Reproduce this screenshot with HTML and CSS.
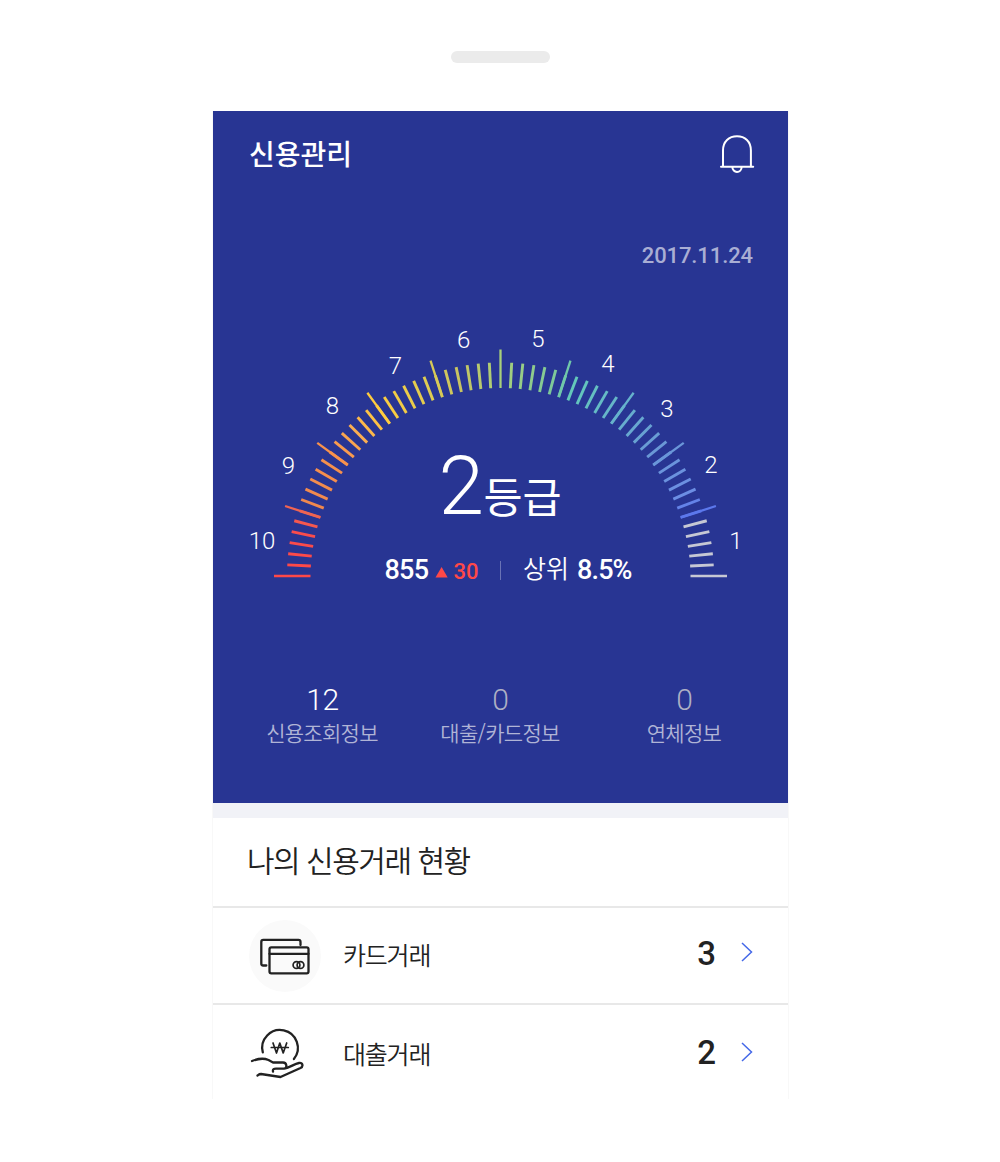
FILE: index.html
```html
<!DOCTYPE html>
<html lang="ko">
<head>
<meta charset="utf-8">
<title>신용관리</title>
<link rel="stylesheet" href="styles.css">
</head>
<body>
<div class="speaker"></div>
<main class="phone">
  <section class="hero">
    <header class="topbar">
      <h1 class="title">신용관리</h1>
      <svg class="bell" width="36" height="40" viewBox="0 0 36 40">
        <path d="M4 32V16.500C4 7.500 10 2.300 18 2.300S31.900 7.500 31.900 16.500V32M2 32.800H34.200M13.400 33.200A4.600 4.700 0 0 0 22.600 33.200"/>
      </svg>
    </header>
    <p class="date">2017.11.24</p>
    <svg class="gauge" width="575" height="300" viewBox="213 310 575 300">
      <g id="ticks"></g>
      <g class="scale">
        <text x="262" y="549">10</text>
        <text x="288.500" y="474">9</text>
        <text x="332.500" y="413.500">8</text>
        <text x="395.500" y="373.500">7</text>
        <text x="463.700" y="348">6</text>
        <text x="538" y="347">5</text>
        <text x="607.800" y="372">4</text>
        <text x="667" y="417">3</text>
        <text x="711" y="473">2</text>
        <text x="736" y="549">1</text>
      </g>
      <text class="grade" x="438.500" y="514">2</text>
      <text class="grade-unit" x="483.500" y="513">등급</text>
      <text class="score" x="384.500" y="578.500" textLength="44.500">855</text>
      <path class="up" d="M435.500 577.500L441.600 567L447.700 577.500Z"/>
      <text class="delta" x="453.500" y="578.500">30</text>
      <path class="bar" d="M500.500 561V580"/>
      <text class="rank" x="523" y="578">상위</text>
      <text class="score" x="577" y="578.500" textLength="55.500">8.5%</text>
    </svg>
    <div class="stats">
      <div class="stat"><b class="num on">12</b><span>신용조회정보</span></div>
      <div class="stat"><b class="num">0</b><span>대출/카드정보</span></div>
      <div class="stat last"><b class="num">0</b><span>연체정보</span></div>
    </div>
  </section>
  <h2 class="heading">나의 신용거래 현황</h2>
  <div class="row">
    <span class="icon round">
      <svg width="72" height="72" viewBox="0 0 72 72">
        <path d="M17.300 45.500H14.200Q12.300 45.500 12.300 43.500V21.900Q12.300 19.900 14.300 19.900H49.500Q51.500 19.900 51.500 21.900V25"/>
        <rect x="20.500" y="27.300" width="39" height="26" rx="1.800"/>
        <path d="M20.500 33.800H59.500"/>
        <circle class="thin" cx="47.500" cy="45" r="3.400"/><circle class="thin" cx="51.500" cy="45" r="3.400"/>
      </svg>
    </span>
    <span class="name">카드거래</span>
    <span class="count">3</span>
    <svg class="arrow" width="14" height="22" viewBox="0 0 14 22"><path d="M2 2L11.500 11L2 20"/></svg>
  </div>
  <div class="row second">
    <span class="icon">
      <svg width="72" height="72" viewBox="0 0 72 72">
        <path d="M13.800 34.300A17.800 17.800 0 1 1 44.900 41"/>
        <path class="thin" d="M22.300 29.500H39.300M24 25L27.500 35L30.800 25L34.200 35L37.700 25"/>
        <path d="M3 43C8 41 15 40 19.500 42L24 44.500H34C38 44.500 38.500 50.300 35 50.700M24 53.500C23.500 51 25 50.700 27 50.700H35C41 49.500 45 46 50 45C54 44.500 54.500 48.500 51.500 50L31.500 59L12 56C10 56 9.500 56.800 8.500 57.500"/>
      </svg>
    </span>
    <span class="name">대출거래</span>
    <span class="count">2</span>
    <svg class="arrow" width="14" height="22" viewBox="0 0 14 22"><path d="M2 2L11.500 11L2 20"/></svg>
  </div>
</main>
<script src="gauge.js"></script>
</body>
</html>
```
FILE: styles.css
```css
* { box-sizing: border-box; }
body {
  margin: 0;
  padding-top: 51px;
  background: #fff;
  font-family: Roboto, "Noto Sans CJK KR", sans-serif;
  color: #222;
}
.speaker {
  width: 99px;
  height: 12px;
  margin: 0 auto 48px 451px;
  border-radius: 6px;
  background: #ebebeb;
}
.phone {
  width: 577px;
  height: 988px;
  margin-left: 212px;
  border: 1px solid #f8f8f8;
  border-top: 0;
  border-bottom: 0;
}
.hero {
  height: 692px;
  background: #283593;
  color: #fff;
}
.topbar {
  display: flex;
  justify-content: space-between;
  align-items: flex-start;
  height: 130px;
  padding: 23px 33px 0 36px;
}
.title {
  margin: -1px 0 0;
  font: 500 28px/40px "Noto Sans CJK KR", sans-serif;
}
.bell path, .icon svg { fill: none; stroke: #fff; stroke-width: 2; stroke-linecap: round; stroke-linejoin: round; }
.date {
  height: 69px;
  margin: 0;
  padding-right: 35px;
  text-align: right;
  font-size: 22px;
  font-weight: 500;
  line-height: 29px;
  letter-spacing: -.1px;
  color: #a9aed4;
}
.gauge { display: block; fill: #fff; }
.gauge line { stroke-linecap: butt; }
.scale { font-size: 24px; font-weight: 300; text-anchor: middle; }
.grade { font-size: 82px; font-weight: 300; }
.grade-unit { font: 400 42.500px "Noto Sans CJK KR", sans-serif; }
.score { font-size: 27px; font-weight: 500; }
.delta { font-size: 22px; font-weight: 500; fill: #ff4848; }
.up { fill: #ff4848; }
.bar { stroke: #6a73b5; }
.rank { font: 350 25px "Noto Sans CJK KR DemiLight", "Noto Sans CJK KR", sans-serif; }
.stats {
  display: grid;
  grid-template-columns: 218px 138px 219px;
  padding-top: 73px;
}
.stat {
  display: flex;
  flex-direction: column;
  align-items: center;
  font: 350 21px/30px "Noto Sans CJK KR DemiLight", "Noto Sans CJK KR", sans-serif;
  letter-spacing: -.7px;
  color: #b0b4d6;
  white-space: nowrap;
}
.last { padding-left: 11px; }
.num { font: 300 30px/34px Roboto, sans-serif; letter-spacing: 0; padding-left: 1px; color: #adb0c4; }
.on { color: #fff; letter-spacing: -.5px; }
.heading {
  height: 105px;
  margin: 0;
  padding: 19px 0 0 34px;
  border-top: 15px solid #f1f2f7;
  border-bottom: 2px solid #e8e8e8;
  font: 350 30px/44px "Noto Sans CJK KR DemiLight", "Noto Sans CJK KR", sans-serif;
  letter-spacing: -1.5px;
}
.row {
  display: flex;
  align-items: center;
  height: 97px;
  padding: 0 34px 0 36px;
  border-bottom: 2px solid #e8e8e8;
}
.second { border: 0; }
.icon { width: 72px; height: 72px; border-radius: 50%; }
.round { background: #fafafa; }
.icon svg { display: block; stroke: #222; stroke-width: 2.300; }
.icon .thin { stroke-width: 1.700; }
.name {
  flex: 1;
  padding: 0 0 4px 22px;
  font: 350 25px/36px "Noto Sans CJK KR DemiLight", "Noto Sans CJK KR", sans-serif;
  letter-spacing: -1.200px;
}
.second .name { padding-bottom: 2px; }
.count { margin-right: 24px; padding-bottom: 5px; font-size: 33px; font-weight: 500; }
.second .count { padding-bottom: 2px; }
.arrow { margin-bottom: 8px; }
.second .arrow { margin-bottom: 3px; }
.arrow path { fill: none; stroke: #4468e8; stroke-width: 1.500; }
```
FILE: gauge.js
```js
// Colour stops along the dial, as [tick index, r, g, b]
const stops = [[0,255,72,72],[4,250,76,76],[6,240,100,82],[7,240,136,78],[12,248,146,76],[15,250,174,82],[18,255,204,62],
  [23,222,204,82],[26,200,196,98],[30,168,208,122],[35,126,200,154],[37,100,200,186],[42,102,178,204],
  [47,106,152,214],[52,108,142,228],[54,92,120,236]];

function tickColor(i) {
  if (i > 54) return "#c6c8d4";
  let k = 0;
  while (k < stops.length - 2 && stops[k + 1][0] < i) k++;
  const a = stops[k], b = stops[k + 1], t = (i - a[0]) / (b[0] - a[0]);
  return "rgb(" + [1, 2, 3].map(n => Math.round(a[n] + (b[n] - a[n]) * t)).join() + ")";
}

const group = document.getElementById("ticks");
function line(i, from, to, width) {
  const angle = Math.PI * (1 - i / 60);
  const el = document.createElementNS("http://www.w3.org/2000/svg", "line");
  el.setAttribute("x1", 500.5 + from * Math.cos(angle));
  el.setAttribute("y1", 576 - from * Math.sin(angle));
  el.setAttribute("x2", 500.5 + to * Math.cos(angle));
  el.setAttribute("y2", 576 - to * Math.sin(angle));
  el.setAttribute("stroke", tickColor(i));
  el.setAttribute("stroke-width", width);
  group.appendChild(el);
}
for (let i = 0; i <= 60; i++) {
  const inner = 190 - 2 * Math.sin(Math.PI * i / 60);
  if (i % 6 === 0) line(i, inner, 226.5, 2.3);
  if (i % 30 !== 0) line(i, inner, i % 6 === 0 ? 211 : 213.5, 2.9);
}
```
